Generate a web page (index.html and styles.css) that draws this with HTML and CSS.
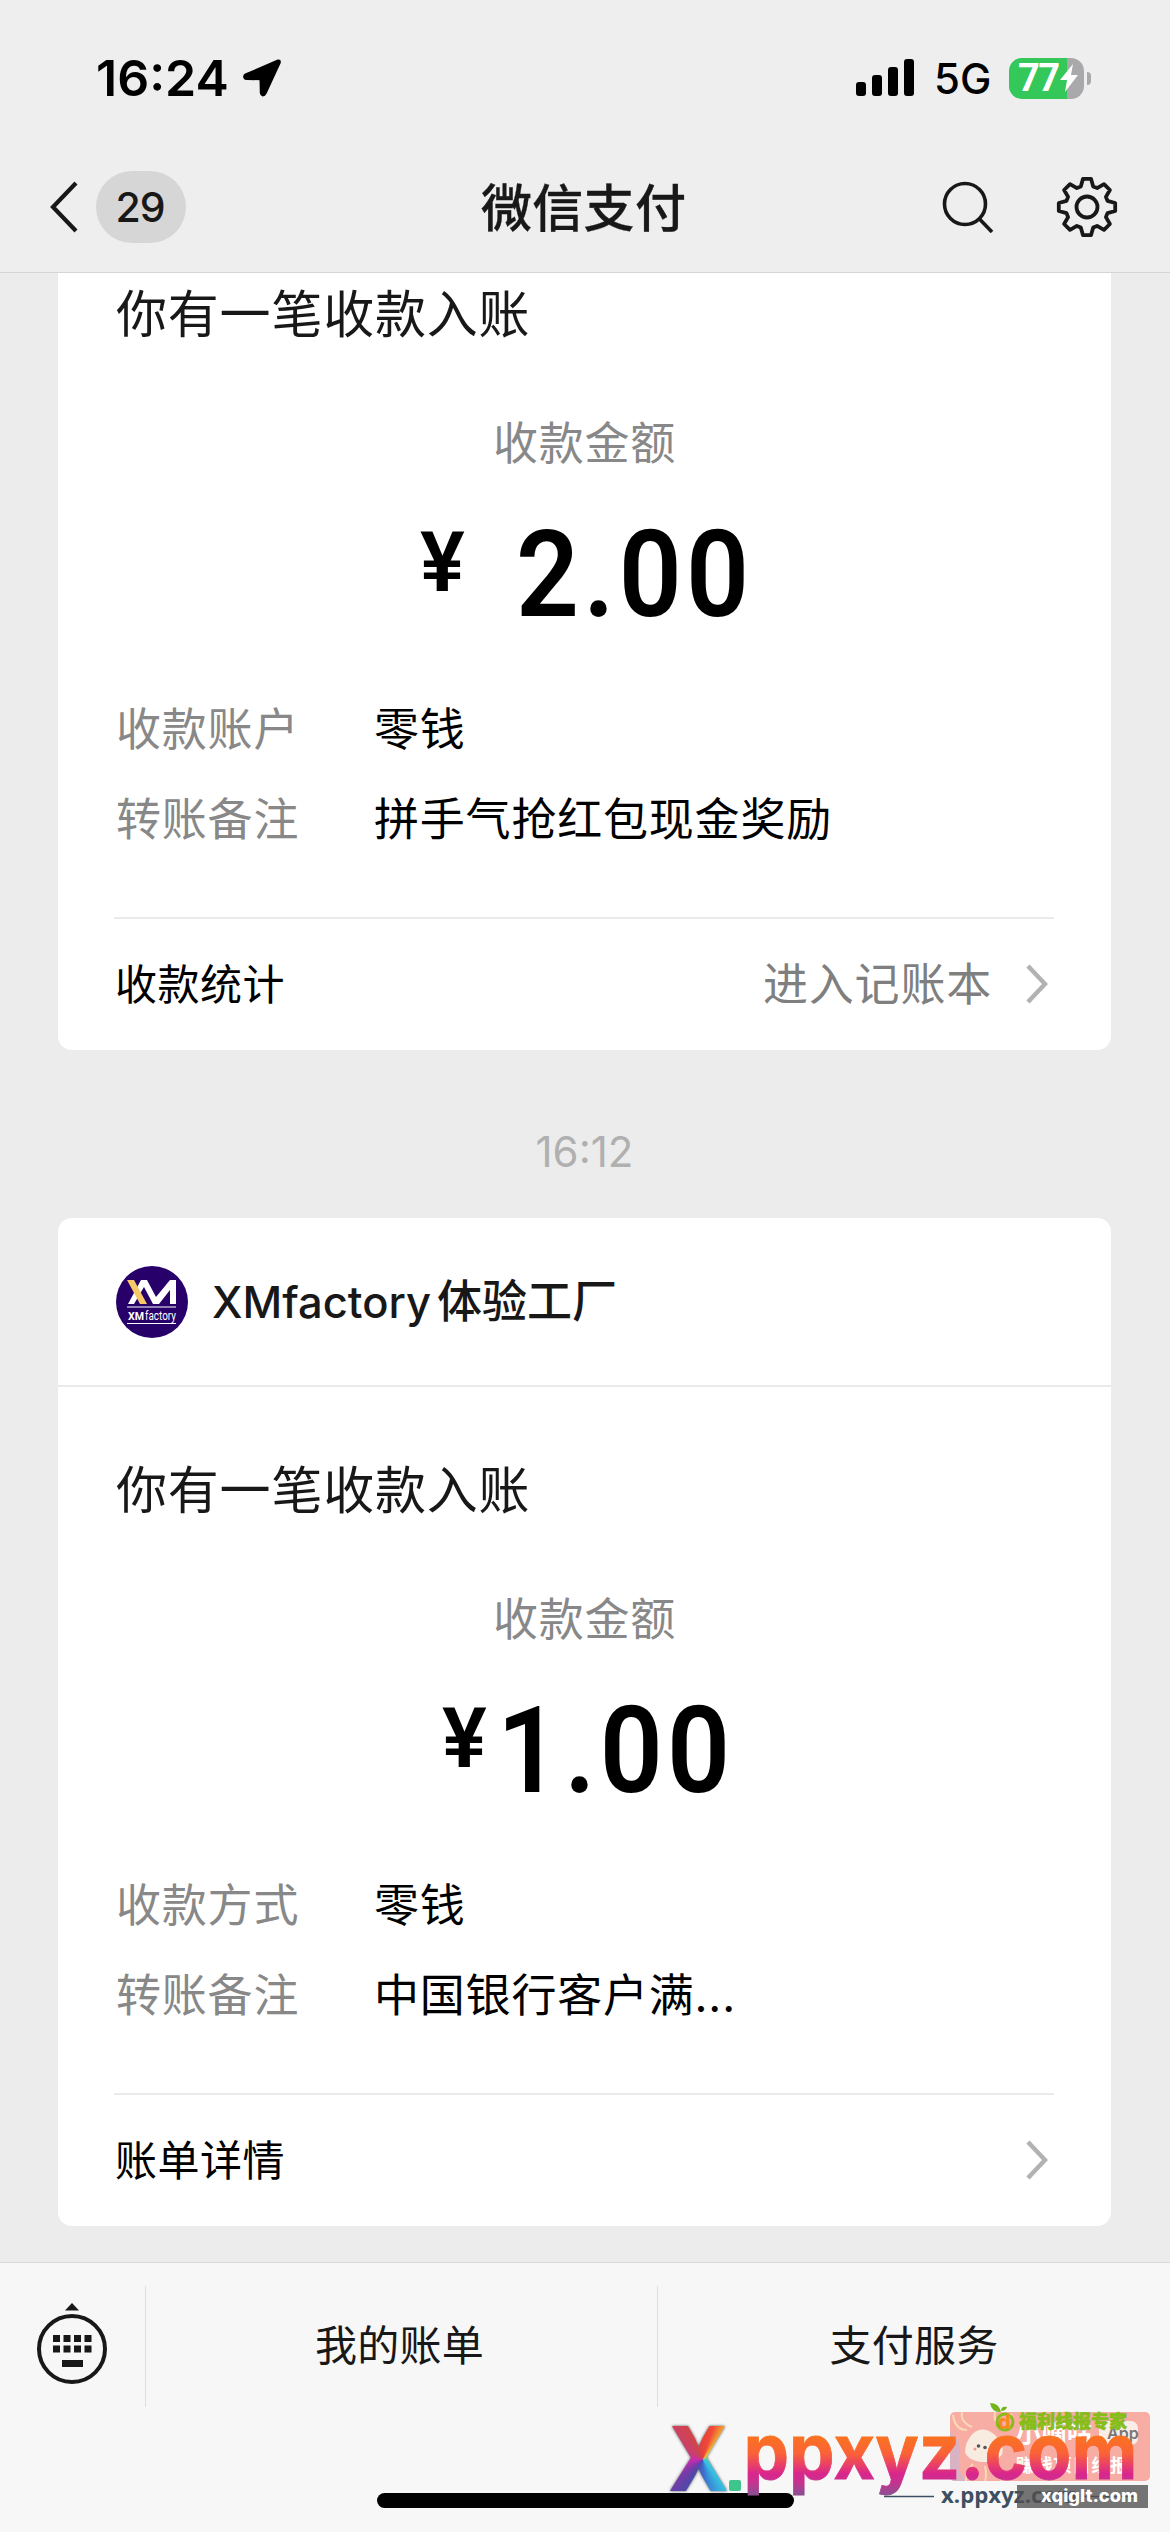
FILE: index.html
```html
<!DOCTYPE html>
<html lang="zh-CN">
<head>
<meta charset="utf-8">
<title>微信支付</title>
<link rel="stylesheet" href="styles.css">
</head>
<body>
<header class="top">
  <div class="status">
    <span class="clock">16:24</span>
    <svg class="arrow" width="40" height="40" viewBox="0 0 40 40"><path d="M36 2.500 L3.500 16.500 Q1.500 17.500 2.500 20 Q3 21 5 21 L18.500 21.200 L18.800 35 Q19 37 20.800 37.500 Q22.700 37.500 23.500 35.500 L37.800 4.500 Q38 2 36 2.500Z" fill="#000" stroke="#000" stroke-width="2" stroke-linejoin="round"/></svg>
    <svg class="signal" width="58" height="38" viewBox="0 0 58 38"><rect y="23" width="10" height="14" rx="3"/><rect x="16" y="16" width="10" height="21" rx="3"/><rect x="32" y="8" width="10" height="29" rx="3"/><rect x="48" y="0" width="10" height="37" rx="3"/></svg>
    <span class="net">5G</span>
    <div class="battery">
      <span class="level">77</span>
      <svg class="bolt" width="20" height="28" viewBox="0 0 18 28"><path d="M13 0 L0 16 H7 L5 28 L18 11 H11Z" fill="#fff"/></svg>
    </div>
    <i class="nub"></i>
  </div>
  <nav class="nav">
    <svg class="back" width="30" height="54" viewBox="0 0 30 54"><path d="M27 3 L4 27 L27 51" fill="none" stroke="#181818" stroke-width="4.200"/></svg>
    <span class="unread">29</span>
    <h1 class="title">微信支付</h1>
    <svg class="search" width="52" height="52" viewBox="0 0 52 52" fill="none" stroke="#181818" stroke-width="3.600"><circle cx="23" cy="23" r="20.500"/><path d="M37.500 38 L50 51"/></svg>
    <svg class="gear" width="62" height="62" viewBox="-31 -31 62 62" fill="none" stroke="#181818" stroke-width="3.800" stroke-linejoin="round"><path d="M-4 -28.200H4L6.200 -20.500L10.100 -18.900L17 -22.900L22.900 -17L18.900 -10.100L20.500 -6.200L28.200 -4V4L20.500 6.200L18.900 10.100L22.900 17L17 22.900L10.100 18.900L6.200 20.500L4 28.200H-4L-6.200 20.500L-10.100 18.900L-17 22.900L-22.900 17L-18.900 10.100L-20.500 6.200L-28.200 4V-4L-20.500 -6.200L-18.900 -10.100L-22.900 -17L-17 -22.900L-10.100 -18.900L-6.200 -20.500Z"/><circle r="10.500"/></svg>
  </nav>
</header>
<main class="feed">
  <article class="card first">
    <p class="headline">你有一笔收款入账</p>
    <p class="caption">收款金额</p>
    <p class="amount wide"><span class="yen">¥</span><span class="num">2.00</span></p>
    <dl class="facts">
      <dt>收款账户</dt><dd>零钱</dd>
      <dt>转账备注</dt><dd>拼手气抢红包现金奖励</dd>
    </dl>
    <div class="link"><span>收款统计</span><span class="more">进入记账本</span><svg class="chev" width="22" height="42" viewBox="0 0 22 42"><path d="M2 3 L19 21 L2 39"/></svg></div>
  </article>
  <time class="stamp">16:12</time>
  <article class="card">
    <div class="merchant">
      <svg class="logo" width="72" height="72" viewBox="0 0 72 72"><circle cx="36" cy="36" r="36" fill="#270069"/><path d="M25 14 H31 L40 31 L54 14 H60 V38 H54 V24 L43 38 H37 L28 21 L18 38 H12Z" fill="#fff"/><path d="M11 14 H18 L31 38 H24Z" fill="#f8c866"/><path d="M11 41H60M11 57.500H60" stroke="#fff" stroke-width="1.200"/><text x="12" y="54" class="logo-text" textLength="16" lengthAdjust="spacingAndGlyphs">XM</text><text x="29" y="54" class="logo-text thin" textLength="31" lengthAdjust="spacingAndGlyphs">factory</text></svg>
      <span class="shop"><span class="latin">XMfactory</span>体验工厂</span>
    </div>
    <p class="headline">你有一笔收款入账</p>
    <p class="caption">收款金额</p>
    <p class="amount"><span class="yen">¥</span><span class="num">1.00</span></p>
    <dl class="facts">
      <dt>收款方式</dt><dd>零钱</dd>
      <dt>转账备注</dt><dd>中国银行客户满...</dd>
    </dl>
    <div class="link"><span>账单详情</span><svg class="chev" width="22" height="42" viewBox="0 0 22 42"><path d="M2 3 L19 21 L2 39"/></svg></div>
  </article>
</main>
<footer class="menu">
  <div class="kbd"><svg width="72" height="82" viewBox="0 0 72 82" fill="#181818"><path d="M36 0 L43 7.500 H29Z"/><circle cx="36" cy="46" r="33" fill="none" stroke="#181818" stroke-width="4"/><path d="M17 32h7v7h-7zM27.500 32h7v7h-7zM38 32h7v7h-7zM48.500 32h7v7h-7zM17 42.500h7v7h-7zM27.500 42.500h7v7h-7zM38 42.500h7v7h-7zM48.500 42.500h7v7h-7zM26 57h21v7H26z"/></svg></div>
  <div class="item bills">我的账单</div>
  <div class="item">支付服务</div>
</footer>
<i class="home"></i>
<div class="badge">
  <svg width="500" height="112" viewBox="660 2400 500 112">
    <defs>
      <linearGradient id="sunset" gradientUnits="userSpaceOnUse" x1="0" y1="2436" x2="0" y2="2494"><stop offset="0" stop-color="#f9731f"/><stop offset=".3" stop-color="#fb6236"/><stop offset=".65" stop-color="#d9268d"/><stop offset=".8" stop-color="#c7328f"/><stop offset="1" stop-color="#8f4e92"/></linearGradient>
    </defs>
    <rect x="950" y="2412" width="200" height="69" rx="5" fill="#f8ada4"/>
    <path d="M950 2432 Q962 2440 960 2455 Q956 2470 966 2481 H955 Q950 2481 950 2476Z" fill="#d9b3c4"/>
    <path d="M953 2415q2 15 14 15M962 2412q-2 10 10 15M1001 2428q-8-6-6-16M1007 2430q0-10 5-16M966 2481q0-10 7-17M985 2466q2 10 0 15M993 2464q8 8 8 17" fill="none" stroke="#fbd9b4" stroke-width="2"/>
    <path d="M979 2430 C992 2426 1006 2445 1002 2454 C996 2466 968 2464 965 2452 C965 2444 970 2433 979 2430Z" fill="#f8ece0"/>
    <circle cx="978.500" cy="2446" r="1.800" fill="#555"/><circle cx="985" cy="2447.500" r="1.800" fill="#555"/><circle cx="975" cy="2449" r="1.500" fill="#f39a9a"/>
    <text class="promo" x="1016" y="2442" font-size="25" textLength="76">小嘀咕</text>
    <rect x="1099" y="2421" width="39" height="24" rx="7" fill="#fbece6"/>
    <text class="app" x="1107" y="2439">App</text>
    <text class="promo" x="1016" y="2472" font-size="18" textLength="112">赚钱项目线报</text>
    <circle cx="1005" cy="2422" r="8" fill="none" stroke="#86bd1a" stroke-width="3"/>
    <text class="mark" x="998" y="2429">d</text>
    <path d="M990 2403 Q999 2403 1001 2412 Q992 2413 990 2403ZM1001 2411 Q1001 2406 1007 2407 Q1006 2411 1001 2411Z" fill="#75b51c"/>
    <text class="expert" x="1019" y="2428" textLength="108">福利线报专家</text>
    <rect x="729" y="2480" width="12" height="11" rx="2" fill="#3fc48c"/>
    <text class="word" x="743.500" y="2478.500" textLength="394" lengthAdjust="spacingAndGlyphs" fill="url(#sunset)">ppxyz.com</text>
    <path d="M884 2496.500H934M1084 2496.500H1136" stroke="#3c5061" stroke-width="1.500"/>
    <text class="site" x="941" y="2502.500" textLength="137" lengthAdjust="spacingAndGlyphs">x.ppxyz.com</text>
    <rect x="1017" y="2485" width="131" height="23" fill="#505050" fill-opacity=".78"/>
    <text class="host" x="1041" y="2502" textLength="97" lengthAdjust="spacingAndGlyphs">xqiglt.com</text>
  </svg>
  <span class="prism">X</span>
</div>
</body>
</html>
```
FILE: styles.css
```css
* { box-sizing: border-box; margin: 0; padding: 0; }
body { position: relative; width: 1170px; height: 2532px; overflow: hidden; background: #ececec; font-family: Inter, "Noto Sans CJK SC", sans-serif; color: #000; display: flex; flex-direction: column; }
svg { display: block; flex: none; }

.top { height: 273px; background: #eee; border-bottom: 1px solid #d5d5d5; flex: none; }
.status { height: 156px; padding: 0 79px 0 96px; display: flex; align-items: center; }
.clock { font-size: 50px; font-weight: 600; width: 146px; }
.signal { margin-left: 574px; }
.net { font-size: 42px; font-weight: 500; margin-left: 20px; width: 75px; }
.battery { width: 75px; height: 41px; border-radius: 13px; background: linear-gradient(90deg, #34c759 58px, #a9a9ab 58px); display: flex; align-items: center; padding-left: 9px; }
.level { font: 700 38px/41px Roboto, sans-serif; color: #fff; letter-spacing: -1.5px; }
.nub { width: 4px; height: 13px; border-radius: 0 4px 4px 0; background: #a9a9ab; margin-left: 3px; }

.nav { height: 102px; padding-left: 49px; display: flex; align-items: center; }
.unread { width: 90px; height: 72px; border-radius: 36px; background: #d6d6d6; margin-left: 17px; padding-right: 2px; font-size: 41px; letter-spacing: -1px; line-height: 72px; text-align: center; color: #181818; font-weight: 500; }
.title { font-size: 51px; font-weight: 500; -webkit-text-stroke: .3px #181818; letter-spacing: .3px; padding-bottom: 5px; margin-left: 295px; width: 461px; color: #181818; }
.gear { margin-left: 62px; }

.feed { flex: none; height: 1989px; padding: 0 59px 0 58px; }
.card { background: #fff; border-radius: 14px; height: 1008px; display: flex; flex-direction: column; }
.first { height: 777px; border-radius: 0 0 14px 14px; }
.merchant { height: 169px; border-bottom: 2px solid #eaeaea; display: flex; align-items: center; padding-left: 58px; gap: 24px; flex: none; }
.shop { font-size: 45px; font-weight: 500; color: #181818; padding-bottom: 6px; }
.latin { font-size: 43.5px; margin-right: 6px; }
.headline { font-size: 51px; letter-spacing: .8px; line-height: 80px; margin-top: 64px; padding-left: 58px; color: #181818; }
.first .headline { margin-top: 2px; }
.caption { font-size: 45px; letter-spacing: .8px; line-height: 60px; margin-top: 59px; text-align: center; color: #888; }
.amount { font-family: Roboto, sans-serif; font-weight: 600; display: flex; margin-top: 31px; height: 140px; padding-left: 384px; }
.amount.wide { padding-left: 362px; }
.yen { font-size: 84px; line-height: 98px; width: 55px; margin-top: 9px; }
.wide .yen { width: 96px; }
.num { font-size: 120px; line-height: 140px; letter-spacing: 4.5px; transform: scaleX(.92); transform-origin: left; }
.facts { display: grid; grid-template-columns: 258px 1fr; line-height: 90px; font-size: 45px; letter-spacing: .8px; margin-top: 40px; padding-left: 58px; }
.facts dt { color: #888; }
.link { margin: auto 57px 0 56px; border-top: 2px solid #eaeaea; height: 133px; display: flex; align-items: center; font-size: 42px; letter-spacing: .5px; padding: 0 6px 2px 1px; }
.link span { padding-bottom: 5px; }
.more { margin-left: auto; color: #7f7f7f; font-size: 45px; letter-spacing: .8px; margin-right: 34px; }
.chev { fill: none; stroke: #b2b2b2; stroke-width: 4.5px; margin-left: auto; }
.more + .chev { margin-left: 0; }
.stamp { display: block; height: 168px; line-height: 204px; text-align: center; font-size: 42px; color: #b0b0b0; }

.menu { flex: none; height: 270px; border-top: 1px solid #d9d9d9; background: #f7f7f7; display: grid; grid-template: 121px / 145px 512px 513px; padding-top: 23px; }
.kbd { padding: 17px 0 0 36px; }
.item { font-size: 42px; letter-spacing: .3px; line-height: 119px; text-align: center; border-left: 1px solid #dedede; color: #181818; }
.bills { padding-right: 4px; }
.home { position: absolute; left: 377px; top: 2493px; width: 417px; height: 15px; border-radius: 8px; background: #000; }
.logo-text { font: 700 11px Roboto, sans-serif; fill: #fff; }
.logo-text.thin { font-weight: 400; font-size: 12px; }

.badge { position: absolute; left: 660px; top: 2400px; }
.prism { position: absolute; left: 8px; top: 14px; font: 800 89px/89px Inter, sans-serif; transform: scaleX(.9); transform-origin: left; color: transparent; background: conic-gradient(from 0deg at 57% 51%, #e8423c 0deg, #f04a38 20deg, #f0c032 42deg, #3ecbd0 100deg, #38bfe0 140deg, #3a6fd0 175deg, #5148a8 215deg, #7a3aa8 235deg, #c82ab0 265deg, #c8406c 300deg, #d04450 330deg, #e8423c 360deg); -webkit-background-clip: text; background-clip: text; filter: drop-shadow(0 0 1.5px #555); }
.word { font: 700 77px Inter, sans-serif; stroke: url(#sunset); stroke-width: .8px; }
.promo { font-family: "Noto Sans CJK SC", sans-serif; font-weight: 700; fill: #fff; }
.app { font: 600 16px Inter, sans-serif; fill: #777; }
.mark { font: 800 20px Inter, sans-serif; fill: #f58a1f; }
.expert { font: 900 18px "Noto Sans CJK SC", sans-serif; fill: #86bd1a; stroke: #86bd1a; stroke-width: .6px; }
.site { font: 700 22px "Open Sans", sans-serif; fill: #3c5061; }
.host { font: 800 17px Inter, sans-serif; fill: #fff; }
```
